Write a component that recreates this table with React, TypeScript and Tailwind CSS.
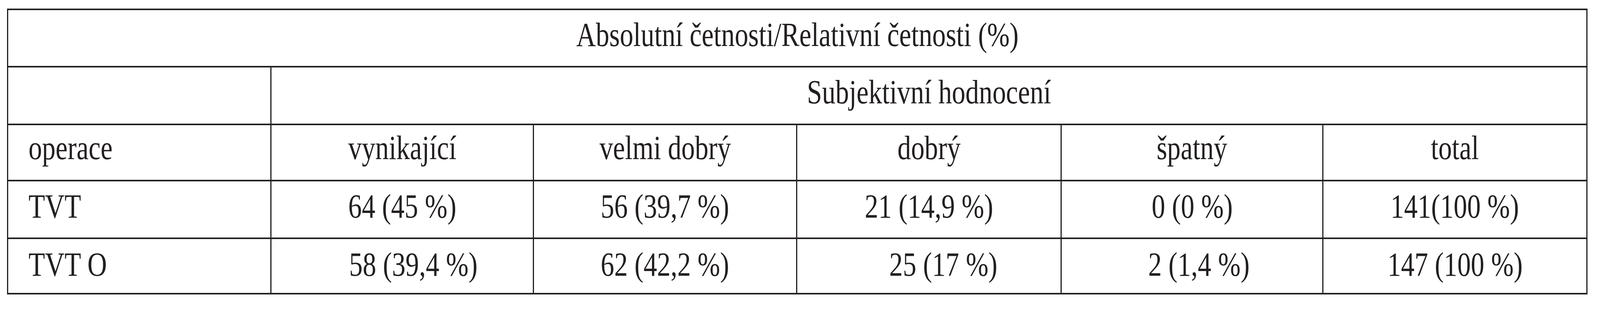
import React from 'react';

// The browser viewport is capped at 4096px wide, so the 5091px-wide table is laid out
// at 4096/5091 of its width (heights unchanged) and the glyphs are narrowed to match.
const columns = ['vynikající', 'velmi dobrý', 'dobrý', 'špatný', 'total'];

const rows: { label: string; cells: { text: string; shift?: string }[]; pad: string }[] = [
  {
    label: 'TVT',
    pad: 'pt-[21px]',
    cells: [
      { text: '64 (45 %)' },
      { text: '56 (39,7 %)' },
      { text: '21 (14,9 %)' },
      { text: '0 (0 %)' },
      { text: '141(100 %)' },
    ],
  },
  {
    label: 'TVT O',
    pad: 'pt-[22px]',
    cells: [
      { text: '58 (39,4 %)', shift: 'pl-[57px]' },
      { text: '62 (42,2 %)' },
      { text: '25 (17 %)', shift: 'pl-[73px]' },
      { text: '2 (1,4 %)', shift: 'pl-[36px]' },
      { text: '147 (100 %)' },
    ],
  },
];

const cell = 'border-r-[3px] border-b-4 border-[#231f20] whitespace-nowrap';

function T({ children, left }: { children: React.ReactNode; left?: boolean }) {
  return (
    <span className={`inline-block scale-x-[0.805] ${left ? 'origin-left' : 'origin-center'}`}>
      {children}
    </span>
  );
}

export default function App() {
  return (
    <div className="w-full h-[800px] bg-white pt-[22px] pl-[18px] font-['Liberation_Serif','Times_New_Roman',serif] text-[86px] leading-none text-[#231f20]">
      <div className="grid w-max grid-cols-[674px_672px_674px_677px_670px_676px] grid-rows-[147px_148px_144px_148px_142px] border-l-[3px] border-t-4 border-[#231f20]">
        {/* Title row */}
        <div className={`${cell} col-span-6 pt-[20px] text-center`}>
          <T>Absolutní četnosti/Relativní četnosti (%)</T>
        </div>

        {/* Group header */}
        <div className={cell}></div>
        <div className={`${cell} col-span-5 pt-[20px] text-center`}>
          <T>Subjektivní hodnocení</T>
        </div>

        {/* Column headers */}
        <div className={`${cell} pt-[15px] pl-[52px]`}>
          <T left>operace</T>
        </div>
        {columns.map((c) => (
          <div key={c} className={`${cell} pt-[15px] text-center`}>
            <T>{c}</T>
          </div>
        ))}

        {/* Data rows */}
        {rows.map((r) => (
          <React.Fragment key={r.label}>
            <div className={`${cell} ${r.pad} pl-[52px]`}>
              <T left>{r.label}</T>
            </div>
            {r.cells.map((c, i) => (
              <div key={i} className={`${cell} ${r.pad} ${c.shift ?? ''} text-center`}>
                <T>{c.text}</T>
              </div>
            ))}
          </React.Fragment>
        ))}
      </div>
    </div>
  );
}
